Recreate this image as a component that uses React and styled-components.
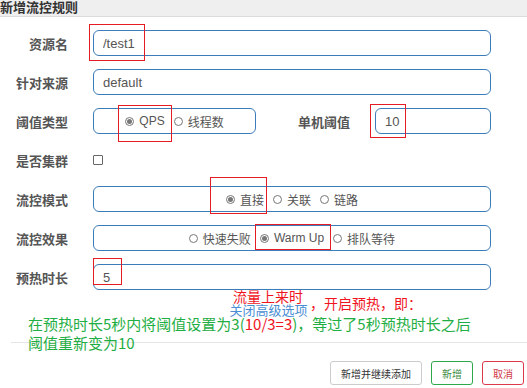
import styled, { createGlobalStyle } from "styled-components";

const GlobalStyle = createGlobalStyle`
  body {
    margin: 0;
    background: #fff;
    font-family: "Liberation Sans", "Noto Sans CJK SC", sans-serif;
  }
`;

const Page = styled.div`
  position: relative;
  width: 527px;
  height: 388px;
  overflow: hidden;
`;

const Header = styled.div`
  height: 16px;
  line-height: 16px;
  background: #efefef;
  border-bottom: 1px solid #dcdcdc;
  font-size: 13px;
  font-weight: bold;
  color: #333;
`;

const Form = styled.div`
  display: flex;
  flex-direction: column;
  gap: 13px;
  padding: 13px 36px 0 0;
`;

const Row = styled.div`
  display: flex;
  align-items: center;
  height: 26px;
`;

const Label = styled.label`
  flex-shrink: 0;
  width: ${(p) => p.$width || 68}px;
  margin-right: 25px;
  text-align: right;
  font-size: 13px;
  font-weight: bold;
  color: #555;
`;

const Input = styled.input`
  flex: 1;
  min-width: 0;
  box-sizing: border-box;
  height: 26px;
  padding: 0 9px;
  border: 1px solid #3b7cba;
  border-radius: 6px;
  font-family: inherit;
  font-size: 13px;
  color: #555;
  outline: none;
`;

const RadioGroup = styled.div`
  display: flex;
  justify-content: center;
  align-items: center;
  gap: 9px;
  box-sizing: border-box;
  height: 26px;
  border: 1px solid #3b7cba;
  border-radius: 6px;
  ${(p) => (p.$width ? `width: ${p.$width}px;` : "flex: 1;")}
`;

const RadioItem = styled.span`
  display: inline-flex;
  align-items: center;
  gap: 5px;
  font-size: 12px;
  color: #555;
`;

const Circle = styled.span`
  position: relative;
  width: 9px;
  height: 9px;
  box-sizing: border-box;
  border: 1px solid #777;
  border-radius: 50%;
  background: #fff;
  &::after {
    content: "";
    display: ${(p) => (p.$checked ? "block" : "none")};
    position: absolute;
    left: 1px;
    top: 1px;
    width: 5px;
    height: 5px;
    border-radius: 50%;
    background: #777;
  }
`;

const Checkbox = styled.span`
  width: 8px;
  height: 8px;
  border: 1px solid #666;
  border-radius: 1px;
`;

const LinkRow = styled.div`
  margin-top: 12px;
  padding-left: 10px;
  text-align: center;
  font-size: 13px;
  line-height: 18px;
`;

const Link = styled.a`
  color: #4a8ed3;
  cursor: pointer;
`;

const Footer = styled.div`
  display: flex;
  justify-content: flex-end;
  gap: 9px;
  margin: 22px 0 0 11px;
  padding: 18px 3px 0 0;
  border-top: 1px solid #e5e5e5;
`;

const Button = styled.button`
  height: 24px;
  padding: 0 10px;
  background: #fff;
  border: 1px solid ${(p) => p.$color || "#ccc"};
  border-radius: 3px;
  font-family: inherit;
  font-size: 10px;
  color: ${(p) => p.$text || "#333"};
`;

const Mark = styled.span`
  position: absolute;
  box-sizing: border-box;
  border: 1px solid #e51c23;
  pointer-events: none;
`;

const Note = styled.div`
  position: absolute;
  white-space: nowrap;
  font-family: "Noto Sans CJK SC", sans-serif;
  font-size: ${(p) => p.$size || 14}px;
  line-height: ${(p) => p.$line || 16}px;
  color: ${(p) => p.$color || "#f0141e"};
`;

const Red = styled.span`
  color: #f0141e;
`;

const marks = [
  { left: 89, top: 24, width: 56, height: 37 },
  { left: 118, top: 105, width: 54, height: 37 },
  { left: 370, top: 104, width: 36, height: 34 },
  { left: 210, top: 177, width: 57, height: 37 },
  { left: 255, top: 224, width: 76, height: 26 },
  { left: 93, top: 258, width: 29, height: 27 },
];

const Radio = ({ checked, children }) => (
  <RadioItem>
    <Circle $checked={checked} />
    {children}
  </RadioItem>
);

export default function App() {
  return (
    <Page>
      <GlobalStyle />
      <Header>新增流控规则</Header>
      <Form>
        <Row>
          <Label>资源名</Label>
          <Input readOnly value="/test1" />
        </Row>
        <Row>
          <Label>针对来源</Label>
          <Input readOnly value="default" />
        </Row>
        <Row>
          <Label>阈值类型</Label>
          <RadioGroup $width={163}>
            <Radio checked>QPS</Radio>
            <Radio>线程数</Radio>
          </RadioGroup>
          <Label $width={94}>单机阈值</Label>
          <Input readOnly value="10" />
        </Row>
        <Row>
          <Label>是否集群</Label>
          <Checkbox />
        </Row>
        <Row>
          <Label>流控模式</Label>
          <RadioGroup>
            <Radio checked>直接</Radio>
            <Radio>关联</Radio>
            <Radio>链路</Radio>
          </RadioGroup>
        </Row>
        <Row>
          <Label>流控效果</Label>
          <RadioGroup>
            <Radio>快速失败</Radio>
            <Radio checked>Warm Up</Radio>
            <Radio>排队等待</Radio>
          </RadioGroup>
        </Row>
        <Row>
          <Label>预热时长</Label>
          <Input readOnly value="5" />
        </Row>
      </Form>
      <LinkRow>
        <Link>关闭高级选项</Link>
      </LinkRow>
      <Footer>
        <Button>新增并继续添加</Button>
        <Button $color="#2ea84a" $text="#3b8a45">新增</Button>
        <Button $color="#dc3a4a" $text="#d0394a">取消</Button>
      </Footer>

      {marks.map((m, i) => (
        <Mark key={i} style={m} />
      ))}
      <Note style={{ left: 233, top: 288 }}>流量上来时</Note>
      <Note style={{ left: 310, top: 295 }}>，开启预热，即：</Note>
      <Note $size={15} $line={19} $color="#1fae44" style={{ left: 28, top: 314 }}>
        在预热时长5秒内将阈值设置为3(<Red>10/3=3</Red>)，等过了5秒预热时长之后
        <br />
        阈值重新变为10
      </Note>
    </Page>
  );
}
